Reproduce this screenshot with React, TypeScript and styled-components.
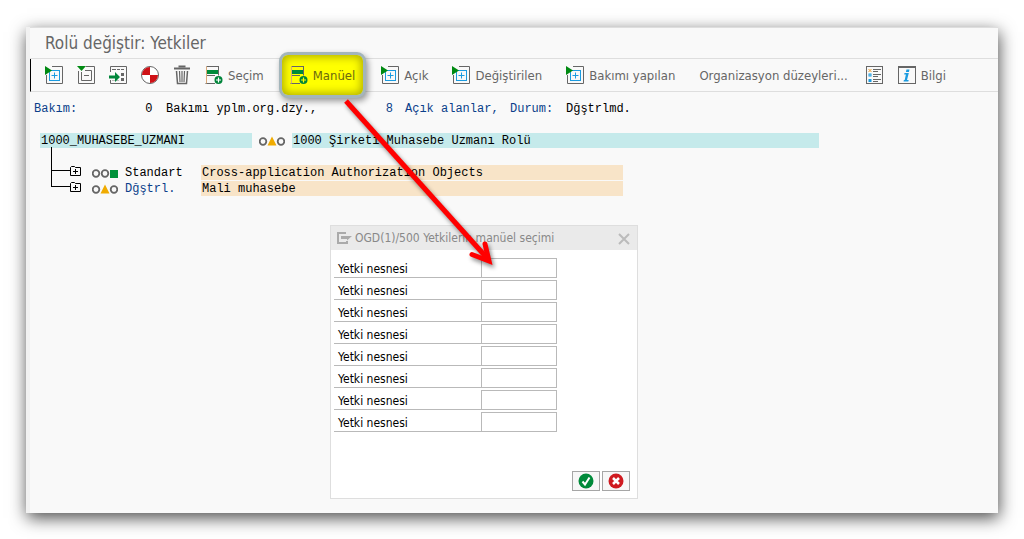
import React from 'react';
import styled, { createGlobalStyle, css } from 'styled-components';

const UI = '"DejaVu Sans Condensed", "DejaVu Sans", "Noto Sans", sans-serif';
const MONO = '"Liberation Mono", "DejaVu Sans Mono", monospace';

const GlobalStyle = createGlobalStyle`
  *, *::before, *::after { box-sizing: border-box; }
  body { margin: 0; background: #fff; font-family: ${UI}; }
  button, input { font: inherit; color: inherit; }
`;

const Page = styled.div`
  padding: 27px 26px 26px;
`;

const Window = styled.main`
  position: relative;
  background: #f9f9f9;
  border-left: 4px solid #f1f1f1;
  box-shadow: 1px 5px 16px rgba(0, 0, 0, 0.7);
`;

const TitleBar = styled.header`
  height: 32px;
  padding-left: 15px;
  border-top: 1px solid #dedede;
  border-bottom: 1px solid #dedede;
`;

const Title = styled.h1`
  margin: 0;
  font-size: 17px;
  line-height: 30px;
  font-weight: 400;
  color: #666;
`;

const Toolbar = styled.div`
  display: flex;
  align-items: center;
  gap: 14px;
  height: 33px;
  padding-left: 14px;
  border-left: 1px solid #000;
  border-bottom: 1px solid #dedede;
  white-space: nowrap;
`;

const ToolButton = styled.button<{ $after?: number; $marked?: boolean }>`
  position: relative;
  display: flex;
  align-items: center;
  gap: 5px;
  flex: none;
  height: 32px;
  margin: 0 ${p => p.$after ?? 0}px 0 0;
  padding: 0;
  border: 0;
  background: none;
  font-size: 13px;
  color: #666;
  svg { display: block; flex: none; }
  ${p => p.$marked && css`
    z-index: 1;
    color: #6b6a10;
    &::before {
      content: '';
      position: absolute;
      inset: -7px -11px;
      z-index: -1;
      border: 3px solid #a3b5bb;
      border-radius: 9px;
      background: #ffff00;
      box-shadow: inset 0 0 9px 2px #b0ae00, 2px 3px 6px rgba(0, 0, 0, 0.4);
    }
  `}
`;

const Content = styled.div`
  padding: 9px 0 14px;
  font-family: ${MONO};
  font-size: 12px;
  line-height: 16px;
  color: #000;
  white-space: pre;
`;

const StatusLine = styled.div`
  display: grid;
  grid-template-columns: 104px 28px 199px 40px 105px 56px auto;
  padding-left: 4px;
`;

const Cell = styled.span<{ $blue?: boolean; $right?: boolean }>`
  color: ${p => (p.$blue ? '#0b3f8a' : '#000')};
  padding-right: ${p => (p.$right ? '12px' : '0')};
  text-align: ${p => (p.$right ? 'right' : 'left')};
`;

const Tree = styled.ul`
  list-style: none;
  margin: 16px 0 0;
  padding: 0 0 0 10px;
`;

const RootRow = styled.div`
  display: flex;
  align-items: center;
  height: 16px;
`;

const Branches = styled.ul`
  list-style: none;
  margin: 0;
  padding: 16px 0 0 11px;
`;

const BranchRow = styled.li`
  display: flex;
  align-items: flex-end;
  height: 16px;
`;

const Elbow = styled.span<{ $tall?: boolean }>`
  flex: none;
  width: 19px;
  height: ${p => (p.$tall ? 24 : 17)}px;
  margin-bottom: 10px;
  border: solid #000;
  border-width: 0 0 1px 1px;
`;

const Band = styled.span<{ $tone: 'teal' | 'sand'; $width: number }>`
  flex: 0 1 ${p => p.$width}px;
  height: 15px;
  line-height: 16px;
  padding-left: 1px;
  margin-bottom: 1px;
  background: ${p => (p.$tone === 'teal' ? '#c5eaeb' : '#f8e4c8')};
`;

const Kind = styled.span<{ $blue?: boolean }>`
  flex: none;
  width: 76px;
  color: ${p => (p.$blue ? '#0b3f8a' : '#000')};
`;

const LightsBox = styled.svg`
  display: block;
  flex: none;
  margin: 0 7px;
`;

const FolderBox = styled.svg`
  display: block;
  flex: none;
  margin: 0 3px 5px 0;
`;

const Dialog = styled.section`
  width: 308px;
  margin: 28px 0 0 300px;
  border: 1px solid #dedede;
  background: #fff;
  font-family: ${UI};
  font-size: 12px;
`;

const DialogHead = styled.div`
  display: flex;
  align-items: center;
  height: 24px;
  padding: 0 7px 0 6px;
  background: #eaeaea;
  color: #888;
  svg { display: block; }
`;

const DialogTitle = styled.h2`
  flex: 1;
  margin: 0 0 0 3px;
  font-size: 12px;
  font-weight: 400;
`;

const CloseButton = styled.button`
  padding: 2px 0 0;
  border: 0;
  background: none;
`;

const Fields = styled.form`
  display: grid;
  gap: 2px;
  margin: 0;
  padding: 8px 80px 0 3px;
`;

const Field = styled.div`
  display: grid;
  grid-template-columns: 147px 76px;
  height: 20px;
`;

const FieldLabel = styled.label`
  height: 20px;
  padding-left: 4px;
  border-bottom: 1px solid #b9b9b9;
  line-height: 22px;
`;

const FieldInput = styled.input`
  width: 100%;
  height: 20px;
  padding: 0 3px;
  border: 1px solid #b9b9b9;
  border-radius: 0;
  background: #fff;
`;

const Actions = styled.div`
  display: flex;
  justify-content: flex-end;
  gap: 2px;
  padding: 39px 7px 7px;
`;

const ActionButton = styled.button`
  display: grid;
  place-items: center;
  width: 28px;
  height: 20px;
  padding: 0;
  border: 1px solid #a6a6a6;
  background: #f7f7f7;
  svg { display: block; }
`;

const Pointer = styled.svg`
  position: absolute;
  left: 306px;
  top: 63px;
  z-index: 2;
  pointer-events: none;
  filter: drop-shadow(2px 3px 2px rgba(0, 0, 0, 0.45));
`;

const ExpandIcon = () => (
  <svg width="18" height="18" viewBox="0 0 18 18" fill="none">
    <path d="M7 .5h10.500v17H1.500V9" stroke="#666" />
    <rect x="4.500" y="4.500" width="10" height="10" stroke="#1b9be0" />
    <path d="M9.500 6.500v6M6.500 9.500h6" stroke="#1b9be0" />
    <path d="M0 0l7 4.500L0 9z" fill="#008a12" />
  </svg>
);

const CollapseIcon = () => (
  <svg width="18" height="18" viewBox="0 0 18 18" fill="none" stroke="#666">
    <path d="M9 .5h8.500v17H1.500V5" />
    <path d="M8 4.500h6.500v10h-10V6" />
    <path d="M7 9.500h5" />
    <path d="M0 0h9L4.500 5z" fill="#008a12" stroke="none" />
  </svg>
);

const TransferIcon = () => (
  <svg width="18" height="18" viewBox="0 0 18 18" fill="none">
    <path d="M1.500 6V.5h16v17h-16V14" stroke="#666" />
    <path d="M3 3.500h4M8 3.500h3M12 3.500h3" stroke="#666" />
    <path d="M12 7h3v3h-3zM12 12h3v3h-3z" fill="#666" />
    <path d="M3 14.500h7" stroke="#bbb" />
    <path d="M0 9.500h6V6l5 5-5 5v-3.500H0z" fill="#00863a" />
  </svg>
);

const BallIcon = () => (
  <svg width="18" height="18" viewBox="0 0 18 18">
    <circle cx="9" cy="9" r="8.500" fill="#fff" stroke="#666" />
    <path d="M9 9V1a8 8 0 0 0-8 8zM9 9v8a8 8 0 0 0 8-8z" fill="#cf1217" />
  </svg>
);

const TrashIcon = () => (
  <svg width="18" height="20" viewBox="0 0 18 20" fill="none" stroke="#666">
    <path d="M1 3.500h16" strokeWidth="2" />
    <path d="M6.500 2.500v-1h5v1" strokeWidth="2" />
    <path d="M3.500 6l1 12.500h9L14.500 6" strokeWidth="1.500" />
    <path d="M6.500 6l.5 11M9 6v11M11.500 6L11 17" strokeWidth="1.200" />
  </svg>
);

const InsertIcon = ({ fill = '#fff' }: { fill?: string }) => (
  <svg width="18" height="18" viewBox="0 0 18 18" fill="none">
    <path d="M14 .5H1.500M.5 17.500H10M13.500 .5v9M1 9.500h9" stroke="#666" />
    <path d="M1.500 .5v17" stroke="#d9a878" />
    <path d="M2 4h11v4H2z" fill="#008a3a" />
    <circle cx="13.500" cy="14" r="4" fill="#00843a" />
    <path d="M13.500 11.500v5M11 14h5" stroke={fill} strokeWidth="1.200" />
  </svg>
);

const ListIcon = () => (
  <svg width="18" height="18" viewBox="0 0 18 18" fill="none">
    <rect x=".5" y=".5" width="16" height="17" stroke="#666" />
    <path d="M7 3.500h8M7 5.500h5M7 8.500h8M7 10.500h5M7 13.500h8M7 15.500h5" stroke="#666" />
    <path d="M2.500 3l3 3M5.500 3l-3 3" stroke="#f0a030" />
    <rect x="3" y="8" width="2" height="2" stroke="#1b9be0" />
    <rect x="2.500" y="13" width="3" height="3" fill="#1b9be0" />
  </svg>
);

const InfoIcon = () => (
  <svg width="18" height="18" viewBox="0 0 18 18" fill="none">
    <rect x=".5" y=".5" width="17" height="17" stroke="#666" />
    <path d="M0 1h18" stroke="#666" strokeWidth="2" />
    <path d="M8.500 3.500h3l-.6 2.500h-3zM6.500 7h4.300l-1.800 7h1.700l-.4 1.500H5.500l.4-1.500h.8L7.900 8.500H6.200z" fill="#1b9be0" />
  </svg>
);

type Light = 'green' | 'yellow';

const Lights = ({ state }: { state: Light }) => (
  <LightsBox width="26" height="16" viewBox="0 0 26 16" fill="none">
    <circle cx="4" cy="8.500" r="3.300" stroke="#666" strokeWidth="1.800" />
    {state === 'green' ? (
      <>
        <circle cx="13" cy="8.500" r="3.300" stroke="#666" strokeWidth="1.800" />
        <path d="M18 5h8v8h-8z" fill="#00923a" />
      </>
    ) : (
      <>
        <path d="M13 3.500l4.500 9h-9z" fill="#f0ab00" />
        <circle cx="22" cy="8.500" r="3.300" stroke="#666" strokeWidth="1.800" />
      </>
    )}
  </LightsBox>
);

const Folder = () => (
  <FolderBox width="12" height="10" viewBox="0 0 12 10" fill="none" stroke="#000">
    <path d="M.5 9.500V1.500L1.500 .5h3l1 1h5v8zM5.500 3v5M3 5.500h5" />
  </FolderBox>
);

const DialogIcon = () => (
  <svg width="15" height="12" viewBox="0 0 15 12" fill="none">
    <path d="M9 1H1v10h9V9" stroke="#aaa" strokeWidth="2" />
    <path d="M4 4h11l-5 4.500V7H4z" fill="#aaa" />
  </svg>
);

const fieldIds = [1, 2, 3, 4, 5, 6, 7, 8];

export default function App() {
  return (
    <>
      <GlobalStyle />
      <Page>
        <Window>
          <TitleBar>
            <Title>Rolü değiştir: Yetkiler</Title>
          </TitleBar>
          <Toolbar role="toolbar">
            <ToolButton aria-label="Aç"><ExpandIcon /></ToolButton>
            <ToolButton aria-label="Kapat"><CollapseIcon /></ToolButton>
            <ToolButton aria-label="Aktar"><TransferIcon /></ToolButton>
            <ToolButton aria-label="Üret"><BallIcon /></ToolButton>
            <ToolButton aria-label="Sil"><TrashIcon /></ToolButton>
            <ToolButton $after={12}><InsertIcon />Seçim</ToolButton>
            <ToolButton $after={12} $marked><InsertIcon fill="#ff0" />Manüel</ToolButton>
            <ToolButton $after={10}><ExpandIcon />Açık</ToolButton>
            <ToolButton $after={10}><ExpandIcon />Değiştirilen</ToolButton>
            <ToolButton $after={10}><ExpandIcon />Bakımı yapılan</ToolButton>
            <ToolButton $after={4}>Organizasyon düzeyleri...</ToolButton>
            <ToolButton aria-label="Liste"><ListIcon /></ToolButton>
            <ToolButton><InfoIcon />Bilgi</ToolButton>
          </Toolbar>
          <Content>
            <StatusLine>
              <Cell $blue>Bakım:</Cell>
              <Cell>{' 0'}</Cell>
              <Cell>Bakımı yplm.org.dzy.,</Cell>
              <Cell $blue $right>8</Cell>
              <Cell $blue>Açık alanlar,</Cell>
              <Cell $blue>Durum:</Cell>
              <Cell>Dğştrlmd.</Cell>
            </StatusLine>
            <Tree>
              <li>
                <RootRow>
                  <Band $tone="teal" $width={212}>1000_MUHASEBE_UZMANI</Band>
                  <Lights state="yellow" />
                  <Band $tone="teal" $width={527}>1000 Şirketi Muhasebe Uzmanı Rolü</Band>
                </RootRow>
                <Branches>
                  <BranchRow>
                    <Elbow $tall />
                    <Folder />
                    <Lights state="green" />
                    <Kind>Standart</Kind>
                    <Band $tone="sand" $width={422}>Cross-application Authorization Objects</Band>
                  </BranchRow>
                  <BranchRow>
                    <Elbow />
                    <Folder />
                    <Lights state="yellow" />
                    <Kind $blue>Dğştrl.</Kind>
                    <Band $tone="sand" $width={422}>Mali muhasebe</Band>
                  </BranchRow>
                </Branches>
              </li>
            </Tree>
            <Dialog role="dialog" aria-labelledby="dialog-title">
              <DialogHead>
                <DialogIcon />
                <DialogTitle id="dialog-title">OGD(1)/500 Yetkilerin manüel seçimi</DialogTitle>
                <CloseButton aria-label="Kapat">
                  <svg width="12" height="12" viewBox="0 0 12 12" stroke="#bbb" strokeWidth="2">
                    <path d="M1 1l10 10M11 1L1 11" />
                  </svg>
                </CloseButton>
              </DialogHead>
              <Fields>
                {fieldIds.map(id => (
                  <Field key={id}>
                    <FieldLabel htmlFor={`object-${id}`}>Yetki nesnesi</FieldLabel>
                    <FieldInput id={`object-${id}`} type="text" />
                  </Field>
                ))}
              </Fields>
              <Actions>
                <ActionButton aria-label="Onayla">
                  <svg width="16" height="16" viewBox="0 0 16 16" fill="none">
                    <circle cx="8" cy="8" r="7.500" fill="#008a3a" />
                    <path d="M4.500 8.500l2.500 3 4.500-7" stroke="#fff" strokeWidth="2" />
                  </svg>
                </ActionButton>
                <ActionButton aria-label="İptal">
                  <svg width="16" height="16" viewBox="0 0 16 16" fill="none">
                    <circle cx="8" cy="8" r="7.500" fill="#cf1a20" />
                    <path d="M5 5l6 6M11 5l-6 6" stroke="#fff" strokeWidth="2.500" />
                  </svg>
                </ActionButton>
              </Actions>
            </Dialog>
          </Content>
          <Pointer width="170" height="180" viewBox="0 0 170 180" fill="none" stroke="#f00">
            <path d="M10 11L151 168" strokeWidth="5" />
            <path d="M136 164.500L153 171L149 154" strokeWidth="5" strokeLinecap="round" strokeLinejoin="miter" />
          </Pointer>
        </Window>
      </Page>
    </>
  );
}
